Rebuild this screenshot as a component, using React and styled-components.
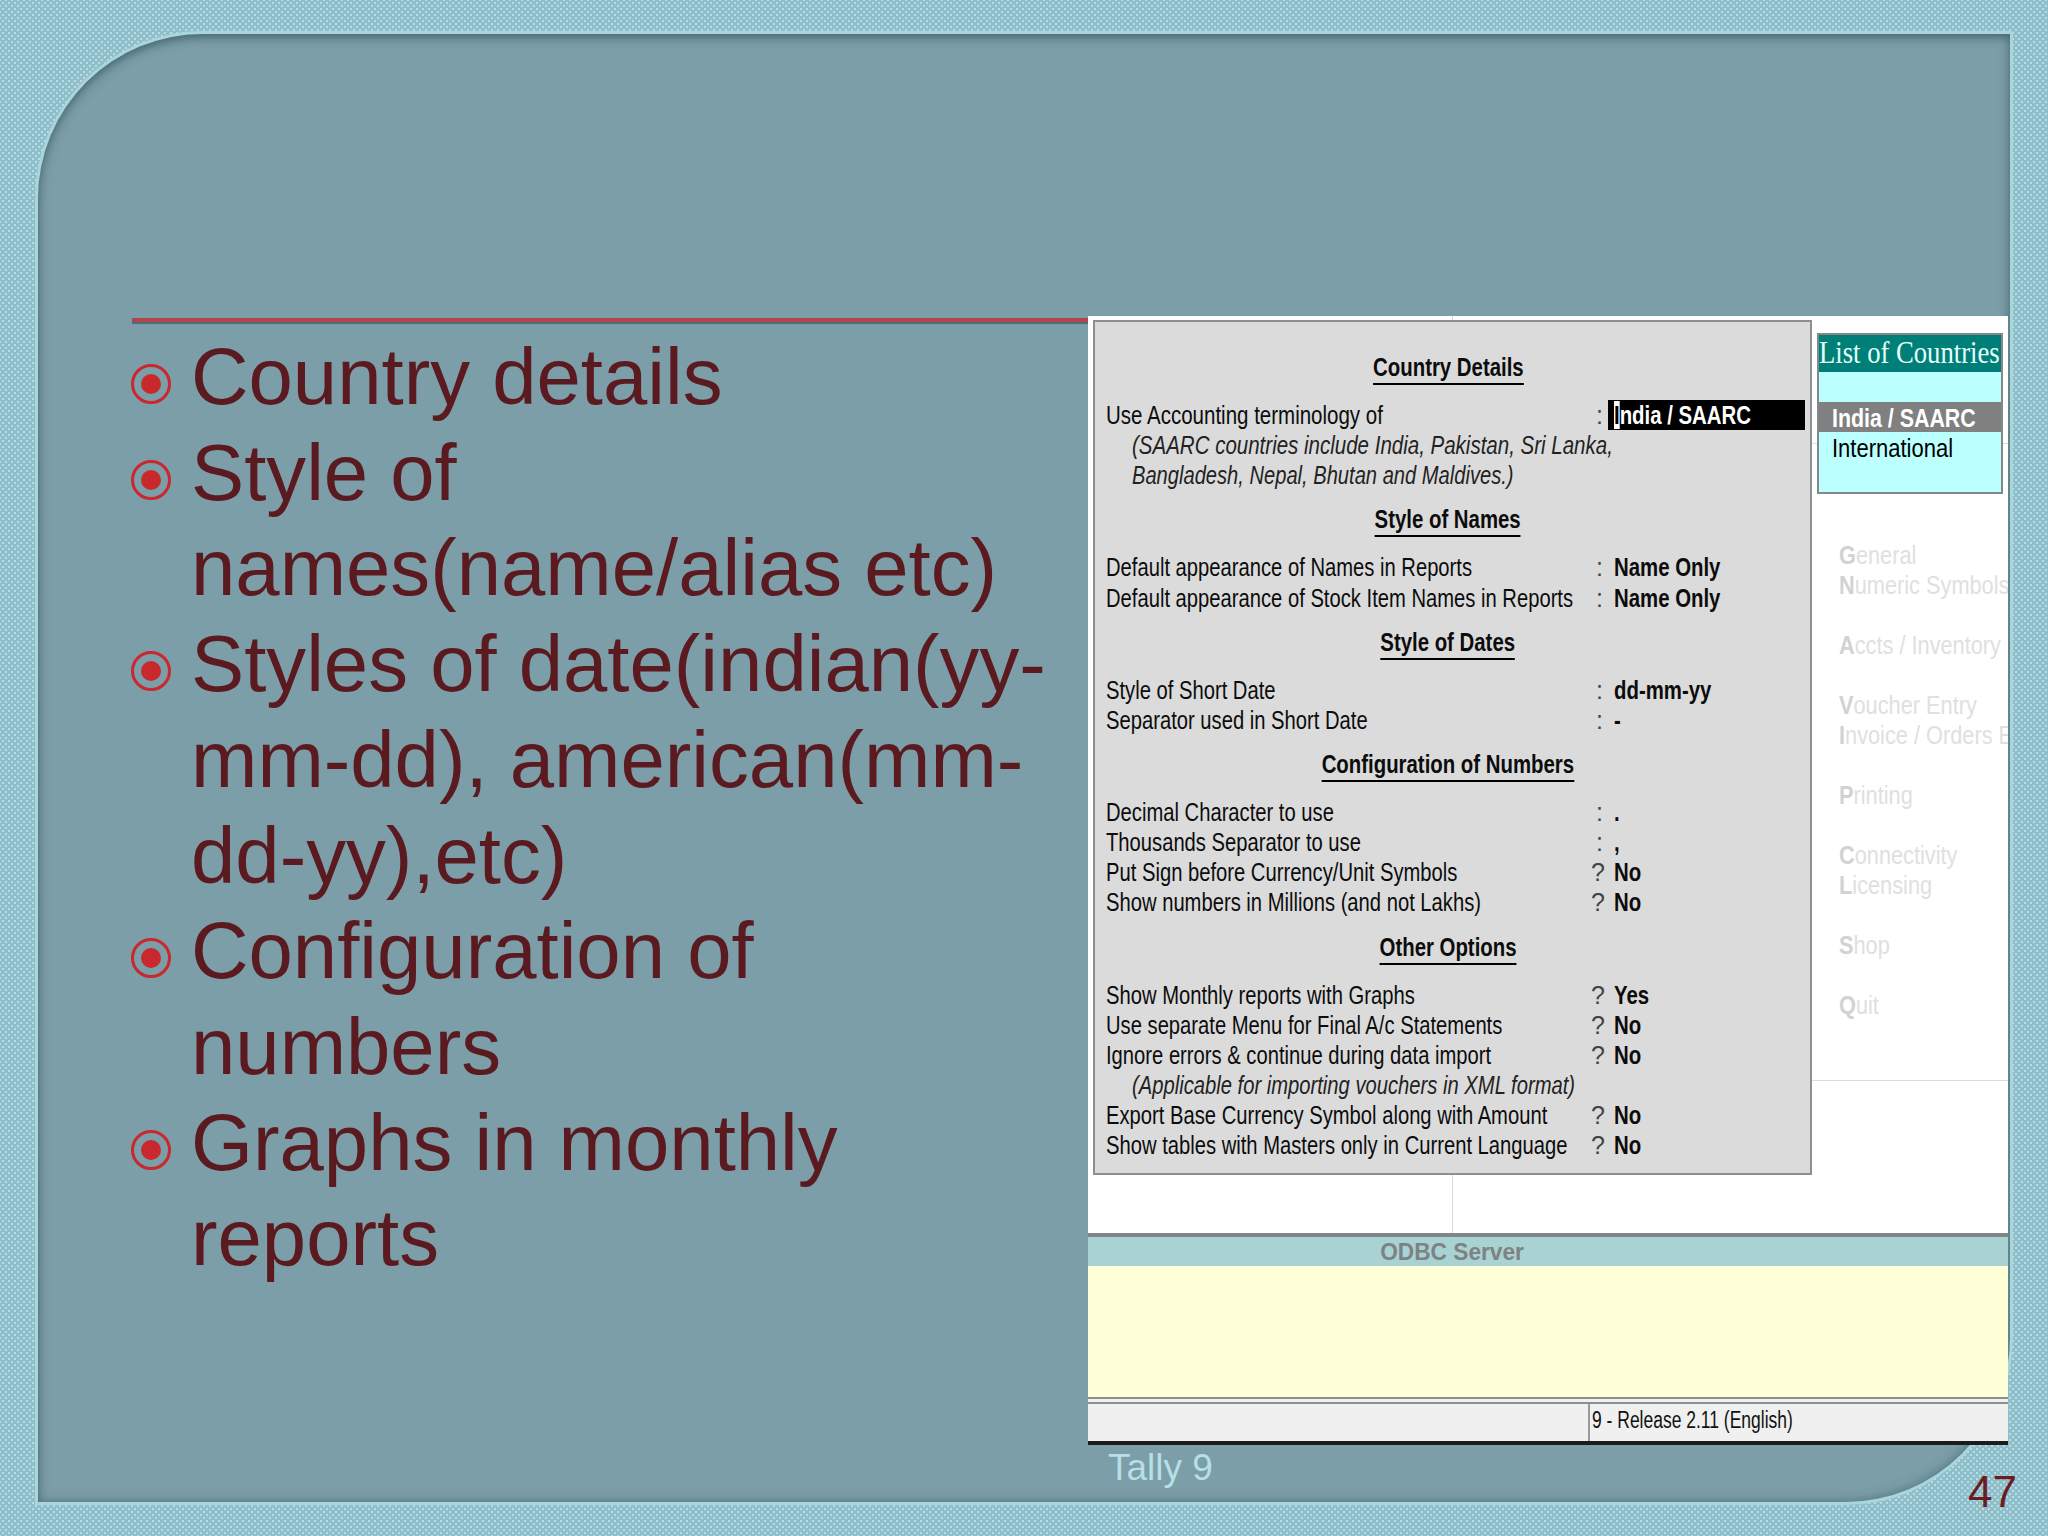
import React from 'react'
import styled, { createGlobalStyle } from 'styled-components'

const Global = createGlobalStyle`
  html, body { margin: 0; padding: 0; }
  body { font-family: "Liberation Sans", Arial, sans-serif; }
`

const Slide = styled.div`
  width: 2048px;
  height: 1536px;
  box-sizing: border-box;
  padding: 34px 38px;
  overflow: hidden;
  background-color: #8fbecb;
  background-image:
    radial-gradient(circle, rgba(214, 242, 246, 0.6) 1px, transparent 1.6px),
    radial-gradient(circle, rgba(214, 242, 246, 0.6) 1px, transparent 1.6px);
  background-size: 6px 6px;
  background-position: 0 0, 3px 3px;
`

const Panel = styled.div`
  width: 1972px;
  height: 1468px;
  box-sizing: border-box;
  padding-top: 282px;
  display: grid;
  grid-template-columns: 1050px 920px;
  background: #7b9ea8;
  border-radius: 165px 0 165px 0;
  box-shadow:
    0 0 0 3px #a8d6da,
    inset 0 5px 10px -2px rgba(50, 80, 90, 0.55),
    inset 0 0 12px rgba(50, 80, 90, 0.5);
`

const LeftColumn = styled.div`
  padding: 2px 0 0 92px;
`

const Rule = styled.div`
  height: 4px;
  margin-left: 2px;
  background: #b0454b;
  box-shadow: 0 2px 1px #4f6a72;
`

const Bullets = styled.ul`
  list-style: none;
  margin: 7px 0 0;
  padding: 0;
`

const BulletItem = styled.li`
  display: grid;
  grid-template-columns: 61px 1fr;
  font-size: 79.7px;
  line-height: 95.7px;
  color: #5a1a1f;
`

const BulletMark = styled.svg`
  width: 42px;
  height: 42px;
  margin-top: 34px;
`

const RightColumn = styled.div`
  display: flex;
  flex-direction: column;
`

const Picture = styled.div`
  height: 1129px;
  display: flex;
  flex-direction: column;
  background: #fff;
`

const Desk = styled.div`
  position: relative;
  height: 917px;
  flex: none;
  box-sizing: border-box;
  padding: 4px 0 0 5px;
  display: flex;
  &::before {
    content: "";
    position: absolute;
    left: 364px;
    top: 0;
    bottom: 0;
    width: 1px;
    background: #d9d9d9;
  }
`

const Dialog = styled.div`
  position: relative;
  width: 719px;
  height: 855px;
  flex: none;
  box-sizing: border-box;
  padding: 31px 11px 0;
  display: flex;
  flex-direction: column;
  gap: 15px;
  background: #dbdbdb;
  border: 2px solid #8b8f90;
  color: #0c0c0c;
  font-size: 25px;
`

const Section = styled.div`
  display: flex;
  flex-direction: column;
`

const HeadingWrap = styled.div`
  width: 100%;
  height: 30px;
  margin-bottom: 17px;
  display: flex;
  justify-content: center;
`

const Narrow = styled.span`
  display: inline-block;
  white-space: nowrap;
  transform: scaleX(${(p) => p.$x || 0.815});
  transform-origin: ${(p) => p.$origin || 'left'} center;
`

const Heading = styled(Narrow)`
  font-weight: bold;
  line-height: 28px;
  height: 30px;
  border-bottom: 2px solid #000;
  margin-left: -9px;
`

const Row = styled.div`
  display: grid;
  grid-template-columns: 490px 18px 1fr;
  height: 30.15px;
  line-height: 30.15px;
`

const Note = styled.div`
  height: 30.15px;
  line-height: 30.15px;
  padding-left: 26px;
  font-style: italic;
  color: #222;
`

const RowMark = styled.span`
  color: #444;
  margin-left: ${(p) => (p.$q ? -5 : 0)}px;
`

const Value = styled(Narrow)`
  font-weight: bold;
`

const ActiveInput = styled.div`
  margin-left: -6px;
  width: 197px;
  height: 30px;
  padding-left: 6px;
  box-sizing: border-box;
  background: #000;
  color: #fff;
  font-weight: bold;
`

const Cursor = styled.span`
  background: #fff;
  color: #000;
`

const Sidebar = styled.div`
  width: 196px;
  flex: none;
  margin-top: -4px;
  box-sizing: border-box;
  overflow: hidden;
  background: linear-gradient(#dcdcdc, #dcdcdc) no-repeat 0 127px / 100% 1px;
`

const ListBox = styled.div`
  margin: 17px 5px 0;
  height: 161px;
  box-sizing: border-box;
  border: 2px solid #82898a;
  background: #bbffff;
`

const ListTitle = styled.div`
  height: 37px;
  line-height: 35px;
  padding-bottom: 1px;
  box-sizing: border-box;
  background: #007f78;
  color: #e6fffb;
  font-family: "Liberation Serif", "Times New Roman", serif;
  font-size: 31px;
  overflow: hidden;
`

const ListOption = styled.div`
  height: 30px;
  line-height: 32px;
  padding-left: 13px;
  font-size: 25px;
  color: ${(p) => (p.$selected ? '#fff' : '#000')};
  background: ${(p) => (p.$selected ? '#808080' : 'transparent')};
  font-weight: ${(p) => (p.$selected ? 'bold' : 'normal')};
  margin-top: ${(p) => (p.$selected ? 30 : 0)}px;
`

const Menu = styled.div`
  margin-top: 46px;
  padding: 0 0 60px 27px;
  border-bottom: 1px solid #dcdcdc;
  font-size: 25px;
  line-height: 30px;
  color: #e0e0e0;
`

const MenuGroup = styled.div`
  margin-bottom: 30px;
  &:last-child { margin-bottom: 0; }
`

const MenuItem = styled.div`
  height: 30px;
`

const Hot = styled.span`
  font-weight: bold;
  color: #d2d2d2;
`

const OdbcBand = styled.div`
  height: 33px;
  flex: none;
  box-sizing: border-box;
  border-top: 4px solid #808587;
  background: #a9d3d3;
  display: flex;
  justify-content: center;
  color: #7d8285;
  font-weight: bold;
  font-size: 24px;
  line-height: 29px;
  padding-right: 192px;
`

const Yellow = styled.div`
  flex: 1;
  background: #ffffd8;
`

const StatusBar = styled.div`
  height: 48px;
  flex: none;
  box-sizing: border-box;
  border-top: 2px solid #8b8f90;
  border-bottom: 4px solid #1c1c1c;
  padding-top: 3px;
  background: #eff0ef;
`

const StatusInner = styled.div`
  height: 100%;
  box-sizing: border-box;
  display: grid;
  grid-template-columns: 496px 1fr;
  border-top: 2px solid #8b8f90;
`

const StatusCell = styled.div`
  border-left: ${(p) => (p.$divider ? '2px solid #9a9a9a' : 'none')};
  margin-left: ${(p) => (p.$divider ? 4 : 0)}px;
  padding-left: 2px;
  font-size: 23px;
  line-height: 33px;
  color: #111;
`

const Footer = styled.div`
  display: flex;
  justify-content: space-between;
  align-items: flex-start;
  padding-left: 20px;
  margin-right: -9px;
`

const TallyLabel = styled.div`
  font-size: 37px;
  line-height: 46px;
  color: #b6dfe6;
`

const PageNumber = styled.div`
  font-size: 44px;
  line-height: 50px;
  margin-top: 22px;
  color: #6b1c20;
`

const Bullet = () => (
  <BulletMark viewBox="0 0 42 42">
    <circle cx="21" cy="21" r="18.5" fill="none" stroke="#c9282c" strokeWidth="3" />
    <circle cx="21" cy="21" r="10" fill="#c9282c" />
  </BulletMark>
)

const points = [
  ['Country details'],
  ['Style of', 'names(name/alias etc)'],
  ['Styles of date(indian(yy-', 'mm-dd), american(mm-', 'dd-yy),etc)'],
  ['Configuration of', 'numbers'],
  ['Graphs in monthly', 'reports'],
]

const sections = [
  {
    title: 'Style of Names',
    rows: [
      ['Default appearance of Names in Reports', ':', 'Name Only'],
      ['Default appearance of Stock Item Names in Reports', ':', 'Name Only'],
    ],
  },
  {
    title: 'Style of Dates',
    rows: [
      ['Style of Short Date', ':', 'dd-mm-yy'],
      ['Separator used in Short Date', ':', '-'],
    ],
  },
  {
    title: 'Configuration of Numbers',
    rows: [
      ['Decimal Character to use', ':', '.'],
      ['Thousands Separator to use', ':', ','],
      ['Put Sign before Currency/Unit Symbols', '?', 'No'],
      ['Show numbers in Millions (and not Lakhs)', '?', 'No'],
    ],
  },
]

const menu = [
  ['General', 'Numeric Symbols'],
  ['Accts / Inventory'],
  ['Voucher Entry', 'Invoice / Orders Entry'],
  ['Printing'],
  ['Connectivity', 'Licensing'],
  ['Shop'],
  ['Quit'],
]

const SettingRow = ({ label, mark, value }) => (
  <Row>
    <Narrow $x={0.808}>{label}</Narrow>
    <RowMark $q={mark === '?'}>{mark}</RowMark>
    <Value>{value}</Value>
  </Row>
)

const Title = ({ children }) => (
  <HeadingWrap>
    <Heading $origin="center">{children}</Heading>
  </HeadingWrap>
)

export default function App() {
  return (
    <>
      <Global />
      <Slide>
        <Panel>
          <LeftColumn>
            <Rule />
            <Bullets>
              {points.map((lines) => (
                <BulletItem key={lines[0]}>
                  <Bullet />
                  <div>
                    {lines.map((line) => (
                      <div key={line}>{line}</div>
                    ))}
                  </div>
                </BulletItem>
              ))}
            </Bullets>
          </LeftColumn>

          <RightColumn>
            <Picture>
              <Desk>
                <Dialog>
                  <Section>
                    <Title>Country Details</Title>
                    <Row>
                      <Narrow $x={0.82}>Use Accounting terminology of</Narrow>
                      <RowMark>:</RowMark>
                      <ActiveInput>
                        <Narrow>
                          <Cursor>I</Cursor>ndia / SAARC
                        </Narrow>
                      </ActiveInput>
                    </Row>
                    <Note>
                      <Narrow $x={0.82}>(SAARC countries include India, Pakistan, Sri Lanka,</Narrow>
                    </Note>
                    <Note>
                      <Narrow $x={0.805}>Bangladesh, Nepal, Bhutan and Maldives.)</Narrow>
                    </Note>
                  </Section>
                  {sections.map((s) => (
                    <Section key={s.title}>
                      <Title>{s.title}</Title>
                      {s.rows.map(([label, mark, value]) => (
                        <SettingRow key={label} label={label} mark={mark} value={value} />
                      ))}
                    </Section>
                  ))}
                  <Section>
                    <Title>Other Options</Title>
                    <SettingRow label="Show Monthly reports with Graphs" mark="?" value="Yes" />
                    <SettingRow label="Use separate Menu for Final A/c Statements" mark="?" value="No" />
                    <SettingRow label="Ignore errors & continue during data import" mark="?" value="No" />
                    <Note>
                      <Narrow $x={0.808}>(Applicable for importing vouchers in XML format)</Narrow>
                    </Note>
                    <SettingRow label="Export Base Currency Symbol along with Amount" mark="?" value="No" />
                    <SettingRow label="Show tables with Masters only in Current Language" mark="?" value="No" />
                  </Section>
                </Dialog>
                <Sidebar>
                  <ListBox>
                    <ListTitle>
                      <Narrow $x={0.86}>List of Countries</Narrow>
                    </ListTitle>
                    <ListOption $selected>
                      <Narrow $x={0.855}>India / SAARC</Narrow>
                    </ListOption>
                    <ListOption>
                      <Narrow $x={0.88}>International</Narrow>
                    </ListOption>
                  </ListBox>
                  <Menu>
                    {menu.map((group) => (
                      <MenuGroup key={group[0]}>
                        {group.map((item) => (
                          <MenuItem key={item}>
                            <Narrow $x={0.87}>
                              <Hot>{item[0]}</Hot>
                              {item.slice(1)}
                            </Narrow>
                          </MenuItem>
                        ))}
                      </MenuGroup>
                    ))}
                  </Menu>
                </Sidebar>
              </Desk>
              <OdbcBand>
                <Narrow $origin="center" $x={0.945}>ODBC Server</Narrow>
              </OdbcBand>
              <Yellow />
              <StatusBar>
                <StatusInner>
                  <StatusCell />
                  <StatusCell $divider>
                    <Narrow $x={0.76}>9 - Release 2.11 (English)</Narrow>
                  </StatusCell>
                </StatusInner>
              </StatusBar>
            </Picture>
            <Footer>
              <TallyLabel>Tally 9</TallyLabel>
              <PageNumber>47</PageNumber>
            </Footer>
          </RightColumn>
        </Panel>
      </Slide>
    </>
  )
}
